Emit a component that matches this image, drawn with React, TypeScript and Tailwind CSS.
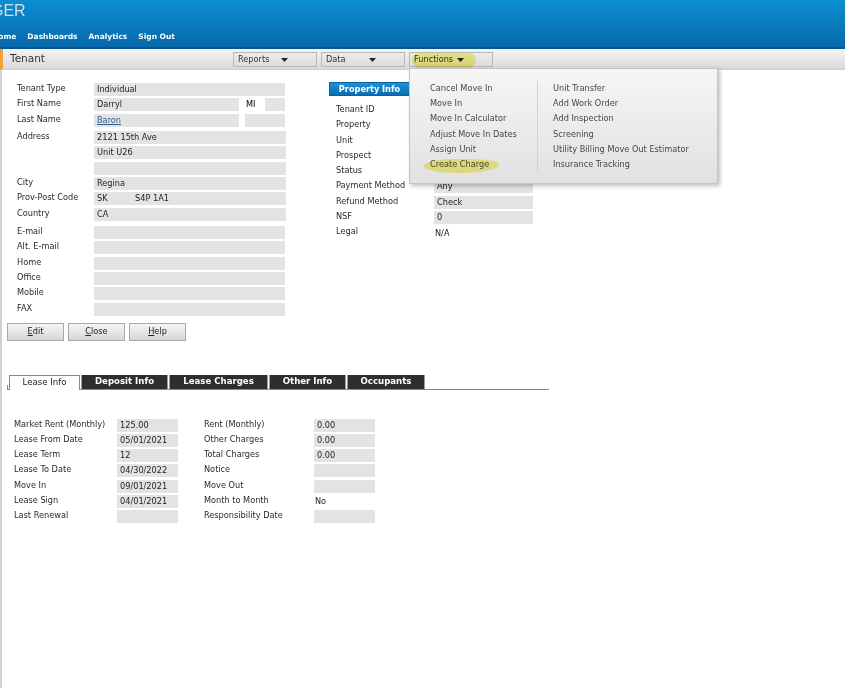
import React from 'react';

const Arrow = () => (
  <svg width="7" height="4" viewBox="0 0 7 4" className="inline-block">
    <path d="M0 0 H7 L3.5 4 Z" fill="#222" />
  </svg>
);

const Box: React.FC<{ w: string; children?: React.ReactNode }> = ({ w, children }) => (
  <div className={`${w} h-[13px] bg-[#e3e3e3] pl-[3px] leading-[13px] text-[#222] whitespace-nowrap`}>{children}</div>
);

const Row: React.FC<{ label: string; lw: string; children?: React.ReactNode; mb?: string }> = ({ label, lw, children, mb }) => (
  <div className={`flex items-center h-[13px] ${mb ?? 'mb-[2.3px]'}`}>
    <div className={`${lw} shrink-0 text-[#2a2a2a] leading-[13px] -mt-[2px] whitespace-nowrap`}>{label}</div>
    {children}
  </div>
);

const ToolButton: React.FC<{ label: string }> = ({ label }) => (
  <div className="w-[84px] h-[15px] border border-[#b9b9b9] bg-gradient-to-b from-[#ececec] to-[#dcdcdc] flex items-center pl-[4px] text-[#333]">
    <span className="w-[43px]">{label}</span>
    <Arrow />
  </div>
);

const FormButton: React.FC<{ first: string; rest: string }> = ({ first, rest }) => (
  <div className="w-[57px] h-[18px] border border-[#a9a9a9] bg-gradient-to-b from-[#f6f6f6] to-[#d6d6d6] flex items-center justify-center text-[#222]">
    <span className="underline">{first}</span>{rest}
  </div>
);

const functionsLeft = ['Cancel Move In', 'Move In', 'Move In Calculator', 'Adjust Move In Dates', 'Assign Unit', 'Create Charge'];
const functionsRight = ['Unit Transfer', 'Add Work Order', 'Add Inspection', 'Screening', 'Utility Billing Move Out Estimator', 'Insurance Tracking'];

const leaseLeft: [string, string | null][] = [
  ['Market Rent (Monthly)', '125.00'],
  ['Lease From Date', '05/01/2021'],
  ['Lease Term', '12'],
  ['Lease To Date', '04/30/2022'],
  ['Move In', '09/01/2021'],
  ['Lease Sign', '04/01/2021'],
  ['Last Renewal', ''],
];

const leaseRight: [string, string | null][] = [
  ['Rent (Monthly)', '0.00'],
  ['Other Charges', '0.00'],
  ['Total Charges', '0.00'],
  ['Notice', ''],
  ['Move Out', ''],
  ['Month to Month', null],
  ['Responsibility Date', ''],
];

export default function App() {
  return (
    <div className="relative w-[845px] h-[688px] overflow-hidden bg-white font-['DejaVu_Sans',sans-serif] text-[8.2px]">
      {/* header */}
      <header className="h-[49px] bg-gradient-to-b from-[#0b8ed2] to-[#0769aa] border-b-2 border-[#05578d] overflow-hidden">
        <div className="-ml-[9px] pt-[1px] h-[26px] font-['Liberation_Sans',sans-serif] text-[16px] text-[#d6dde3] leading-[20px]">GER</div>
        <nav className="flex items-center gap-[11px] -ml-[8px] pt-[5px] text-white font-bold text-[7.5px]">
          <span>Home</span>
          <span>Dashboards</span>
          <span>Analytics</span>
          <span>Sign Out</span>
        </nav>
      </header>

      {/* toolbar */}
      <div className="h-[21px] flex items-center border-l-[3px] border-[#f0a03c] bg-gradient-to-b from-[#f4f4f4] to-[#d9d9d9] border-b border-b-[#cfcfcf]">
        <div className="pl-[7px] w-[230px] text-[10.5px] text-[#333]">Tenant</div>
        <div className="flex gap-[4px] mt-[1px]">
          <ToolButton label="Reports" />
          <ToolButton label="Data" />
          <ToolButton label="Functions" />
        </div>
      </div>

      {/* page body */}
      <div className="border-l-[2px] border-[#d0d0d0] h-[619px]">
        <div className="flex items-start pt-[13px] pl-[5px]">
          {/* tenant form */}
          <div className="w-[279px]">
            <div className="pl-[10px]">
              <Row label="Tenant Type" lw="w-[77px]"><Box w="w-[191px]">Individual</Box></Row>
              <Row label="First Name" lw="w-[77px]">
                <Box w="w-[145px]">Darryl</Box>
                <span className="ml-[7px] w-[19px] -mt-[2px]">MI</span>
                <Box w="w-[20px]" />
              </Row>
              <Row label="Last Name" lw="w-[77px]" mb="mb-[4.5px]">
                <Box w="w-[145px]"><span className="underline text-[#2f5f8f]">Baron</span></Box>
                <div className="ml-[6px]"><Box w="w-[40px]" /></div>
              </Row>
              <Row label="Address" lw="w-[77px]"><Box w="w-[192px]">2121 15th Ave</Box></Row>
              <Row label="" lw="w-[77px]"><Box w="w-[192px]">Unit U26</Box></Row>
              <Row label="" lw="w-[77px]"><Box w="w-[192px]" /></Row>
              <Row label="City" lw="w-[77px]"><Box w="w-[192px]">Regina</Box></Row>
              <Row label="Prov-Post Code" lw="w-[77px]">
                <Box w="w-[192px]"><span className="inline-block w-[38px]">SK</span>S4P 1A1</Box>
              </Row>
              <Row label="Country" lw="w-[77px]" mb="mb-[5.5px]"><Box w="w-[192px]">CA</Box></Row>
              <Row label="E-mail" lw="w-[77px]"><Box w="w-[191px]" /></Row>
              <Row label="Alt. E-mail" lw="w-[77px]"><Box w="w-[191px]" /></Row>
              <Row label="Home" lw="w-[77px]"><Box w="w-[191px]" /></Row>
              <Row label="Office" lw="w-[77px]"><Box w="w-[191px]" /></Row>
              <Row label="Mobile" lw="w-[77px]"><Box w="w-[191px]" /></Row>
              <Row label="FAX" lw="w-[77px]" mb="mb-0"><Box w="w-[191px]" /></Row>
            </div>
            <div className="flex gap-[4px] mt-[7px]">
              <FormButton first="E" rest="dit" />
              <FormButton first="C" rest="lose" />
              <FormButton first="H" rest="elp" />
            </div>
          </div>

          {/* property info */}
          <div className="ml-[43px] -mt-[1px]">
            <div className="w-[81px] h-[14px] bg-gradient-to-b from-[#1b93d8] to-[#0a6db3] border border-[#0a5f9c] text-white font-bold flex items-center justify-center">
              Property Info
            </div>
            <div className="pl-[7px] pt-[8px]">
              {[
                ['Tenant ID', null],
                ['Property', null],
                ['Unit', null],
                ['Prospect', null],
                ['Status', null],
                ['Payment Method', 'Any'],
                ['Refund Method', 'Check'],
                ['NSF', '0'],
              ].map(([l, v]) => (
                <Row key={l as string} label={l as string} lw="w-[98px]">
                  {v !== null ? <Box w="w-[99px]">{v}</Box> : null}
                </Row>
              ))}
              <Row label="Legal" lw="w-[98px]"><span className="pl-[1px] text-[#222]">N/A</span></Row>
            </div>
          </div>
        </div>

        {/* tabs */}
        <div className="mt-[34px] pl-[5px] flex items-end">
          <div className="w-[2px] h-[5px] border-l border-b border-[#888]" />
          <div className="w-[71px] h-[15px] border border-b-0 border-[#8a8a8a] bg-white flex items-center justify-center text-[#222] text-[8.6px]">Lease Info</div>
          <div className="flex border-b border-[#8a8a8a]">
            {[
              ['Deposit Info', 'w-[87px]'],
              ['Lease Charges', 'w-[99px]'],
              ['Other Info', 'w-[77px]'],
              ['Occupants', 'w-[78px]'],
            ].map(([t, w]) => (
              <div key={t} className={`${w} h-[14px] ml-[1px] bg-[#2e2e2e] border-l border-r border-[#9a9a9a] text-white font-bold flex items-center justify-center text-[8.6px]`}>
                {t}
              </div>
            ))}
          </div>
          <div className="w-[124px] border-b border-[#8a8a8a]" />
        </div>

        {/* lease info */}
        <div className="flex pt-[29px] pl-[12px]">
          <div>
            {leaseLeft.map(([l, v]) => (
              <Row key={l} label={l} lw="w-[103px]">
                <Box w="w-[61px]">{v}</Box>
              </Row>
            ))}
          </div>
          <div className="ml-[26px]">
            {leaseRight.map(([l, v]) => (
              <Row key={l} label={l} lw="w-[110px]">
                {v === null ? <span className="pl-[1px] text-[#222]">No</span> : <Box w="w-[61px]">{v}</Box>}
              </Row>
            ))}
          </div>
        </div>
      </div>

      {/* functions dropdown */}
      <div className="absolute left-[409px] top-[68px] w-[309px] h-[116px] border border-[#c4c4c4] bg-gradient-to-b from-[#f6f6f6] to-[#e1e1e1] shadow-[2px_2px_4px_rgba(0,0,0,0.25)] flex pt-[12px] text-[#474747]">
        <div className="w-[128px] pl-[20px] border-r border-[#d2d2d2] h-[92px]">
          {functionsLeft.map(f => (
            <div key={f} className="h-[15.2px] leading-[15.2px] whitespace-nowrap">{f}</div>
          ))}
        </div>
        <div className="pl-[15px]">
          {functionsRight.map(f => (
            <div key={f} className="h-[15.2px] leading-[15.2px] whitespace-nowrap">{f}</div>
          ))}
        </div>
      </div>

      {/* highlighter marks */}
      <div className="absolute left-[412px] top-[53px] w-[64px] h-[15px] rounded-full bg-[#f2ee5c] opacity-70 mix-blend-multiply" />
      <div className="absolute left-[424px] top-[159px] w-[75px] h-[14px] rounded-[50%_40%_60%_50%] bg-[#f2ee5c] opacity-70 mix-blend-multiply" />
    </div>
  );
}
